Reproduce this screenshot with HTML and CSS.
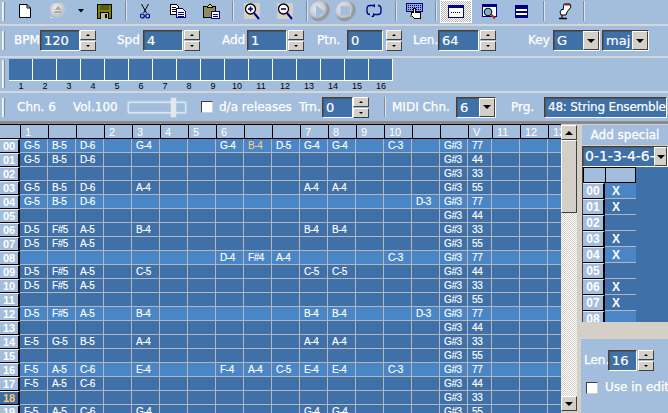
FILE: index.html
```html
<!DOCTYPE html>
<html lang="en"><head><meta charset="utf-8"><title>Tracker</title><link rel="stylesheet" href="styles.css"></head>
<body>
<header class="bars">
<div class="bar bar1">
  <i class="grip"></i>
  <span class="btn w39"><svg width="12" height="14" viewBox="0 0 12 14"><path d="M.5.5h7.5l3.500 3.500v9.500h-11z" fill="#fff" stroke="#000"/><path d="M8 .5v3.500h3.500" fill="none" stroke="#000"/></svg></span>
  <span class="btn w27"><svg width="18" height="16" viewBox="0 0 18 16"><defs><radialGradient id="d1" cx=".4" cy=".4" r=".65"><stop offset="0" stop-color="#f4f4f4"/><stop offset=".65" stop-color="#c9c9c9"/><stop offset="1" stop-color="#a3bddc"/></radialGradient></defs><circle cx="9" cy="7" r="8" fill="url(#d1)"/><path d="M9 3l3.500 4h-7z" fill="#a8a8a8"/><rect x="5.500" y="8" width="7" height="2" fill="#a8a8a8"/><rect x="1" y="14" width="3" height="1" fill="#e8e0c0"/></svg></span>
  <span class="btn w20"><svg width="6" height="4" viewBox="0 0 6 4"><path d="M0 0h6L3 3.500z" fill="#000"/></svg></span>
  <span class="btn w26"><svg width="15" height="15" viewBox="0 0 15 15" shape-rendering="crispEdges"><rect width="15" height="15" fill="#000"/><rect x="1" y="1" width="13" height="13" fill="#808000"/><rect x="3" y="1" width="9" height="5" fill="#5c5c10"/><rect x="3" y="8" width="9" height="7" fill="#000"/><rect x="4" y="9" width="7" height="6" fill="#c4c0a8"/><rect x="8" y="10" width="2" height="4" fill="#000"/></svg></span>
  <i class="sep m8"></i>
  <span class="btn w35"><svg width="10" height="15" viewBox="0 0 10 15"><path d="M1.500 0L6.500 9M8.500 0L3.500 9" stroke="#000" fill="none"/><circle cx="2.300" cy="12" r="2" fill="none" stroke="#000080" stroke-width="1.200"/><circle cx="7.700" cy="12" r="2" fill="none" stroke="#000080" stroke-width="1.200"/></svg></span>
  <span class="btn w32"><svg width="16" height="14" viewBox="0 0 16 14" shape-rendering="crispEdges"><path d="M.5.500h6l2 2v8h-8z" fill="#fff" stroke="#000"/><path d="M2 3h4M2 5h4M2 7h4" stroke="#000"/><path d="M6.500 4.500h6l3 3v6h-9z" fill="#fff" stroke="#000080"/><path d="M8 8h6M8 10h6M8 12h6" stroke="#000080"/></svg></span>
  <span class="btn w34"><svg width="17" height="15" viewBox="0 0 17 15" shape-rendering="crispEdges"><rect x=".5" y="2.500" width="12" height="11" fill="#808040" stroke="#000"/><rect x="1" y="3" width="11" height="10" fill="#8d8d58"/><path d="M4.500 2.500l2-2h1l2 2v1h-5z" fill="#ffd050" stroke="#000"/><rect x="8.500" y="7.500" width="8" height="7" fill="#fff" stroke="#000080"/><path d="M10 10h5M10 12h5" stroke="#000080"/></svg></span>
  <i class="sep m4"></i>
  <span class="btn w36"><svg width="16" height="17" viewBox="0 0 16 17"><rect width="16" height="16" fill="#d4d0c8"/><circle cx="6.500" cy="6" r="5" fill="#fff" stroke="#000" stroke-width="1.300"/><path d="M4 6h5M6.500 3.500v5" stroke="#000080" stroke-width="1.600"/><path d="M10 10l5 6" stroke="#000080" stroke-width="2"/></svg></span>
  <span class="btn w30"><svg width="16" height="17" viewBox="0 0 16 17"><rect width="16" height="16" fill="#d4d0c8"/><circle cx="6.500" cy="6" r="5" fill="#fff" stroke="#000" stroke-width="1.300"/><path d="M4 6h5" stroke="#000080" stroke-width="1.600"/><path d="M10 10l5 6" stroke="#000080" stroke-width="2"/></svg></span>
  <i class="sep m6"></i>
  <span class="btn w24"><svg width="22" height="21" viewBox="0 0 22 21"><defs><radialGradient id="d2" cx=".36" cy=".36" r=".66"><stop offset="0" stop-color="#eceef0"/><stop offset=".55" stop-color="#c8cdd4"/><stop offset=".8" stop-color="#8d8f94"/><stop offset="1" stop-color="#a3bddc"/></radialGradient></defs><circle cx="11" cy="10.500" r="10.500" fill="url(#d2)"/><path d="M7 4l9 6.500-9 6.500z" fill="#a3bddc"/></svg></span>
  <span class="btn w28"><svg width="22" height="21" viewBox="0 0 22 21"><circle cx="11" cy="10.500" r="10.500" fill="url(#d2)"/><rect x="5.500" y="5" width="10" height="10" fill="#a3bddc" stroke="#c8c8c8"/></svg></span>
  <span class="btn w28"><svg width="16" height="14" viewBox="0 0 16 14"><path d="M7 1.500H4Q1 1.500 1 4.500v3Q1 10.500 4 10.500M9 10.500h3Q15 10.500 15 7.500v-3Q15 1.500 12 1.500" fill="none" stroke="#000080" stroke-width="1.300"/><path d="M9 0l-3 1.500L9 3.500zM7 9l3 1.500-3 2z" fill="#000080"/><path d="M5 13l3-3v3z" fill="#000080"/></svg></span>
  <i class="sep m7"></i>
  <span class="btn w36"><svg width="18" height="17" viewBox="0 0 18 17" shape-rendering="crispEdges"><rect x=".5" y=".5" width="16" height="8" fill="#8fa9c8" stroke="#000080"/><path d="M2 2.500h13M2 4.500h13M2 6.500h13" stroke="#000080" stroke-dasharray="1 1"/><path d="M7 8V5h2v4h5v6H8l-3-3V9h2z" fill="#fff" stroke="#000"/><rect x="4" y="12" width="2" height="2" fill="#808000"/></svg></span>
  <i class="sep m2"></i>
  <span class="btn active"><svg width="16" height="13" viewBox="0 0 16 13" shape-rendering="crispEdges"><rect width="16" height="13" fill="#000080"/><rect x="1" y="3" width="14" height="9" fill="#fff"/><path d="M3 7h10" stroke="#000" stroke-dasharray="1 1"/></svg></span>
  <span class="btn w34"><svg width="15" height="15" viewBox="0 0 15 15"><rect x=".5" y=".5" width="14" height="12" fill="#fff" stroke="#000080"/><rect width="15" height="3" fill="#000080"/><circle cx="6" cy="8" r="3.800" fill="#78b8c8" stroke="#000"/><path d="M9 10.500l4 4" stroke="#c02020" stroke-width="2"/></svg></span>
  <span class="btn w31"><svg width="13" height="13" viewBox="0 0 13 13" shape-rendering="crispEdges"><rect width="13" height="13" fill="#000080"/><rect x="1" y="4" width="11" height="2" fill="#fff"/><rect x="1" y="8" width="11" height="2" fill="#fff"/></svg></span>
  <i class="sep m6"></i>
  <span class="btn w38"><svg width="15" height="17" viewBox="0 0 15 17"><path d="M7 1h6l1 3-4 5-1 3H4L3 9l2-3 1 1z" fill="#fff" stroke="#000" stroke-linejoin="round"/><path d="M8 .5h5v2H8z" fill="#a01818"/><path d="M2 15.500h8" stroke="#000" stroke-width="1.500"/><path d="M5 12v3" stroke="#000"/></svg></span>
  <i class="sep"></i>
</div>
<div class="bar bar2">
  <i class="grip"></i>
  <label class="lab lab-bpm">BPM</label><div class="inp i40">120</div><div class="spin"><b class="up"></b><b class="dn"></b></div>
  <label class="lab lab-spd">Spd</label><div class="inp i40">4</div><div class="spin s1"><b class="up"></b><b class="dn"></b></div>
  <label class="lab lab-add">Add</label><div class="inp i40">1</div><div class="spin s1"><b class="up"></b><b class="dn"></b></div>
  <label class="lab lab-ptn">Ptn.</label><div class="inp i36">0</div><div class="spin s3"><b class="up"></b><b class="dn"></b></div>
  <label class="lab lab-len">Len.</label><div class="inp i41">64</div><div class="spin s1"><b class="up"></b><b class="dn"></b></div>
  <label class="lab lab-key">Key</label><div class="combo c47"><span>G</span><b class="drop"></b></div><div class="combo c47 s2"><span>maj</span><b class="drop"></b></div>
</div>
<div class="bar bar3">
  <i class="grip tall"></i>
  <div class="pats">
    <div class="pat">1</div><div class="pat">2</div><div class="pat">3</div><div class="pat">4</div><div class="pat">5</div><div class="pat">6</div><div class="pat">7</div><div class="pat">8</div><div class="pat">9</div><div class="pat">10</div><div class="pat">11</div><div class="pat">12</div><div class="pat">13</div><div class="pat">14</div><div class="pat">15</div><div class="pat">16</div>
  </div>
</div>
<div class="bar bar4">
  <i class="grip"></i>
  <label class="lab lab-chn">Chn. 6</label>
  <label class="lab lab-vol">Vol.100</label>
  <div class="slider"><i class="thumb"></i></div>
  <i class="check chk-da"></i><label class="lab lab-da">d/a releases</label>
  <label class="lab lab-trn">Trn.</label><div class="inp i31 small">0</div><div class="spin small"><b class="up"></b><b class="dn"></b></div>
  <i class="sep m15"></i>
  <label class="lab lab-midi">MIDI Chn.</label><div class="combo c40 small"><span>6</span><b class="drop"></b></div>
  <label class="lab lab-prg">Prg.</label><div class="inp prg small">48: String Ensemble 1</div>
</div>
</header>
<main class="main">
<div class="gridwrap">
<table class="grid">
<thead><tr><th class="corner"></th><th>1</th><th></th><th></th><th>2</th><th>3</th><th>4</th><th>5</th><th>6</th><th></th><th></th><th>7</th><th>8</th><th>9</th><th>10</th><th></th><th></th><th class="v">V</th><th>11</th><th>12</th><th>13</th></tr></thead>
<tbody>
<tr class="hi"><th>00</th><td>G-5<td>B-5<td>D-6<td><td>G-4<td><td><td>G-4<td class="sel">B-4<td>D-5<td>G-4<td>G-4<td><td>C-3<td><td>G#3<td>77<td><td><td></tr>
<tr><th>01</th><td>G-5<td>B-5<td>D-6<td><td><td><td><td><td><td><td><td><td><td><td><td>G#3<td>44<td><td><td></tr>
<tr><th>02</th><td><td><td><td><td><td><td><td><td><td><td><td><td><td><td><td>G#3<td>33<td><td><td></tr>
<tr><th>03</th><td>G-5<td>B-5<td>D-6<td><td>A-4<td><td><td><td><td><td>A-4<td>A-4<td><td><td><td>G#3<td>55<td><td><td></tr>
<tr class="hi"><th>04</th><td>G-5<td>B-5<td>D-6<td><td><td><td><td><td><td><td><td><td><td><td>D-3<td>G#3<td>77<td><td><td></tr>
<tr><th>05</th><td><td><td><td><td><td><td><td><td><td><td><td><td><td><td><td>G#3<td>44<td><td><td></tr>
<tr><th>06</th><td>D-5<td>F#5<td>A-5<td><td>B-4<td><td><td><td><td><td>B-4<td>B-4<td><td><td><td>G#3<td>33<td><td><td></tr>
<tr><th>07</th><td>D-5<td>F#5<td>A-5<td><td><td><td><td><td><td><td><td><td><td><td><td>G#3<td>55<td><td><td></tr>
<tr class="hi"><th>08</th><td><td><td><td><td><td><td><td>D-4<td>F#4<td>A-4<td><td><td><td>C-3<td><td>G#3<td>77<td><td><td></tr>
<tr><th>09</th><td>D-5<td>F#5<td>A-5<td><td>C-5<td><td><td><td><td><td>C-5<td>C-5<td><td><td><td>G#3<td>44<td><td><td></tr>
<tr><th>10</th><td>D-5<td>F#5<td>A-5<td><td><td><td><td><td><td><td><td><td><td><td><td>G#3<td>33<td><td><td></tr>
<tr><th>11</th><td><td><td><td><td><td><td><td><td><td><td><td><td><td><td><td>G#3<td>55<td><td><td></tr>
<tr class="hi"><th>12</th><td>D-5<td>F#5<td>A-5<td><td>B-4<td><td><td><td><td><td>B-4<td>B-4<td><td><td>D-3<td>G#3<td>77<td><td><td></tr>
<tr><th>13</th><td><td><td><td><td><td><td><td><td><td><td><td><td><td><td><td>G#3<td>44<td><td><td></tr>
<tr><th>14</th><td>E-5<td>G-5<td>B-5<td><td>A-4<td><td><td><td><td><td>A-4<td>A-4<td><td><td><td>G#3<td>33<td><td><td></tr>
<tr><th>15</th><td><td><td><td><td><td><td><td><td><td><td><td><td><td><td><td>G#3<td>55<td><td><td></tr>
<tr class="hi"><th>16</th><td>F-5<td>A-5<td>C-6<td><td>E-4<td><td><td>F-4<td>A-4<td>C-5<td>E-4<td>E-4<td><td>C-3<td><td>G#3<td>77<td><td><td></tr>
<tr><th>17</th><td>F-5<td>A-5<td>C-6<td><td><td><td><td><td><td><td><td><td><td><td><td>G#3<td>44<td><td><td></tr>
<tr class="cur"><th>18</th><td><td><td><td><td><td><td><td><td><td><td><td><td><td><td><td>G#3<td>33<td><td><td></tr>
<tr><th>19</th><td>F-5<td>A-5<td>C-6<td><td>G-4<td><td><td><td><td><td>G-4<td>G-4<td><td><td><td>G#3<td>55<td><td><td></tr>
</tbody></table>
</div>
<div class="vscroll"><b class="sbtn up"></b><b class="sthumb"></b><i class="strack"></i><b class="sbtn dn"></b></div>
<aside class="side">
  <div class="addsp">Add special</div>
  <div class="combo spcombo"><span>0-1-3-4-6-7-9</span><b class="drop"></b></div>
  <div class="subwrap">
    <table class="sub">
      <thead><tr><th></th><th class="xc"></th></tr></thead>
      <tbody>
      <tr class="hi"><th>00</th><td>X</td></tr><tr><th>01</th><td>X</td></tr><tr><th>02</th><td></td></tr><tr><th>03</th><td>X</td></tr><tr class="hi"><th>04</th><td>X</td></tr><tr><th>05</th><td></td></tr><tr><th>06</th><td>X</td></tr><tr><th>07</th><td>X</td></tr><tr class="hi"><th>08</th><td></td></tr>
      </tbody>
    </table>
  </div>
  <div class="opts">
    <div class="lenrow"><label class="lab">Len.</label><div class="inp i29">16</div><div class="spin s1 sm"><b class="up"></b><b class="dn"></b></div></div>
    <div class="editrow"><i class="check"></i><label class="lab">Use in editor</label></div>
  </div>
</aside>
</main>
</body></html>
```
FILE: styles.css
```css
*{box-sizing:border-box}
html,body{margin:0;padding:0;width:668px;height:413px;overflow:hidden;background:#a3bddc}
body{font-family:"DejaVu Sans",sans-serif;color:#fff}
.bars{display:block}
.bar{display:flex;align-items:center;background:#a3bddc;overflow:hidden;white-space:nowrap}
.bar1{height:26px;padding-bottom:2px;border-bottom:2px solid #d4d6d8}
.bar2{height:32px;padding-bottom:2px;padding-top:1px;border-bottom:2px solid #d4d6d8}
.bar3{height:35px;border-bottom:2px solid #d4d6d8;align-items:flex-start}
.bar4{height:31px;border-bottom:3px solid #8a8a8a}
.grip{display:block;margin-left:2px;width:3px;height:19px;background:#e6e8ea;border-right:1px solid #8090a4;border-left:1px solid #f4f4f4;flex:none}
.grip.tall{height:28px;margin-top:2px}
.sep{display:block;flex:none;width:2px;height:20px;background:#dfe3e8;border-left:1px solid #7f8c9c}
.m2{margin-left:2px}.m4{margin-left:4px}.m6{margin-left:6px}.m7{margin-left:7px}.m8{margin-left:8px}.m15{margin-left:15px}
.btn{display:flex;align-items:center;justify-content:center;flex:none;height:22px}
.w20{width:20px}.w24{width:24px}.w26{width:26px}.w27{width:27px}.w28{width:28px}.w30{width:30px}.w31{width:31px}.w32{width:32px}.w34{width:34px}.w35{width:35px}.w36{width:36px}.w38{width:38px}.w39{width:39px}
.active{width:32px;margin-left:3px;height:23px;border:1px solid #fff;background:conic-gradient(#fff 25%,#b8b8b0 0 50%,#fff 0 75%,#b8b8b0 0) 0 0/2px 2px}
.lab{display:block;flex:none;font-size:12px;color:#fff;line-height:15px;-webkit-text-stroke:.25px #fff}
.lab-bpm{margin-left:9px;width:26px}
.lab-spd{margin-left:21px;width:26px}
.lab-add{margin-left:22px;width:25px}
.lab-ptn{margin-left:13px;width:30px}
.lab-len{margin-left:11px;width:25px}
.lab-key{margin-left:32px;width:25px}
.inp,.combo{flex:none;height:21px;border:1px solid;border-color:#404040 #fff #fff #404040;box-shadow:inset 1px 1px 0 #555;background:#4070a8;color:#fff;font-size:13px;line-height:19px;padding-left:3px;overflow:hidden;white-space:nowrap;-webkit-text-stroke:.2px #fff}
.i29{width:29px}.i31{width:31px}.i36{width:36px}.i40{width:40px}.i41{width:41px}
.prg{width:123px;padding-left:3px;font-size:12px;letter-spacing:-.2px}
.small{height:21px}
.spin{display:flex;flex-direction:column;gap:1px;width:16px;flex:none;height:21px}
.s1{margin-left:1px}.s2{margin-left:2px}.s3{margin-left:3px}
.spin b{display:flex;align-items:center;justify-content:center;flex:1;background:#d4d0c8;border:1px solid;border-color:#fff #404040 #404040 #fff}
.spin b::after{content:"";width:0;height:0;border-left:2px solid transparent;border-right:2px solid transparent}
.spin .up::after{border-bottom:2px solid #000}
.spin .dn::after{border-top:2px solid #000}
.combo{display:flex;padding-left:3px;justify-content:space-between;align-items:stretch}
.combo span{overflow:hidden}
.c47{width:47px}.c40{width:40px}
.drop{display:flex;align-items:center;justify-content:center;flex:none;width:16px;background:#d4d0c8;border:1px solid;border-color:#fff #404040 #404040 #fff;box-shadow:1px 1px 0 #222}
.drop::after{content:"";width:0;height:0;border-left:4px solid transparent;border-right:4px solid transparent;border-top:4px solid #000}
.pats{display:flex;margin-left:4px;margin-top:1px}
.pat{width:24px;height:32px;padding-top:23px;border:0 solid #fff;text-align:center;color:#000;font:9px/9px "Liberation Sans",sans-serif;background:linear-gradient(#4070a8 21px,#fff 21px,#fff 22px,#a3bddc 22px);position:relative}
.pat::after{content:"";position:absolute;right:0;top:0;width:1px;height:22px;background:#fff}
.lab-chn{margin-left:12px;width:39px}
.lab-vol{margin-left:17px;width:47px}
.slider{flex:none;margin-left:8px;width:58px;height:11px;border:1px solid #dce6f0;box-shadow:0 0 2px #fff,inset 0 0 1px #fff;position:relative}
.thumb{position:absolute;left:42px;top:-5px;width:5px;height:19px;background:#e4e8ec;box-shadow:0 0 1px #fff}
.check{display:block;flex:none;width:12px;height:12px;background:#fff;border:1px solid;border-color:#404040 #d4d0c8 #d4d0c8 #404040}
.chk-da{margin-left:15px}
.lab-da{margin-left:6px;width:74px}
.lab-trn{margin-left:6px;width:23px}
.lab-midi{margin-left:6px;width:64px}
.lab-prg{margin-left:15px;width:33px}
.main{display:flex;height:289px;overflow:hidden}
.gridwrap{width:561px;flex:none;overflow:hidden;height:289px}
table{border-collapse:separate;border-spacing:0}
.grid{table-layout:fixed;width:576px}
.grid th,.grid td{padding:0;height:14px;max-height:14px;overflow:hidden;white-space:nowrap;font:10px/11px "Liberation Sans",sans-serif;letter-spacing:-.4px}
.grid td{width:28px;background:#4070a8;border-right:1px solid #b4b8bc;border-bottom:1px solid #b4b8bc;padding-left:4px;color:#fff;vertical-align:middle;-webkit-text-stroke:.15px #fff}
.grid tr td:nth-child(18){width:24px}
.grid tr.hi td{background:#4a86c5}
.grid td.sel{background:#2f5078;color:#ffd27a;-webkit-text-stroke:0}
.grid thead th{height:15px;width:28px;background:#a3bddc;border-top:1px solid #000;border-bottom:1px solid #000;border-left:1px solid #000;text-align:left;padding:2px 0 0 4px;color:#fff;font:11px/11px "Liberation Sans",sans-serif;letter-spacing:0}
.grid thead th:first-child{width:20px;border-left:0}
.grid thead th.v{width:24px}
.grid tbody th{width:20px;background:#a3bddc;border-right:2px solid #000;border-bottom:1px solid #000;border-top:1px solid #e8eef5;color:#fff;font:bold 11px/11px "Liberation Sans",sans-serif;text-align:center;letter-spacing:0}
.grid tr.cur td{background:#4070a8}
.grid tr.cur th{background:#3a6ba6;color:#ffc870}
.vscroll{width:16px;flex:none;display:flex;flex-direction:column;height:289px;background:#d4d0c8}
.sbtn,.sthumb{display:flex;align-items:center;justify-content:center;flex:none;background:#d4d0c8;border:1px solid;border-color:#fff #404040 #404040 #fff}
.sbtn{height:15px;margin-top:1px}
.sbtn.up::after{content:"";width:0;height:0;border-left:4px solid transparent;border-right:4px solid transparent;border-bottom:4px solid #000}
.sbtn.dn::after{content:"";width:0;height:0;border-left:4px solid transparent;border-right:4px solid transparent;border-top:4px solid #000}
.sthumb{height:73px}
.strack{display:block;flex:1;background:conic-gradient(#fff 25%,#d4d0c8 0 50%,#fff 0 75%,#d4d0c8 0) 0 0/2px 2px}
.vscroll .dn{margin-top:0;margin-bottom:2px}
.side{flex:1;min-width:0;display:flex;flex-direction:column;background:#d4d0c8;padding-left:5px;overflow:hidden}
.addsp{height:20px;margin-top:1px;background:#a3bddc;text-align:center;font:12px/20px "DejaVu Sans",sans-serif;color:#fff;-webkit-text-stroke:.3px #fff}
.spcombo{height:21px;width:86px;margin-top:1px;padding-left:2px;font-size:14px;line-height:19px;flex:none}
.spcombo span{flex:1;min-width:0}
.spcombo .drop{width:13px}
.subwrap{height:155px;flex:none;background:#4070a8;overflow:hidden;border-left:1px solid #404040}
.sub{table-layout:fixed;width:53px}
.sub th,.sub td{padding:0;overflow:hidden}
.sub thead th{height:16px;background:#a3bddc;border-left:1px solid #000;border-top:1px solid #000;border-bottom:1px solid #000}
.sub thead th.xc{width:31px;border-right:1px solid #000}
.sub tbody th{height:16px;width:21px;background:#a3bddc;border-right:2px solid #000;border-bottom:1px solid #000;border-top:1px solid #e8eef5;font:bold 12px/13px "Liberation Sans",sans-serif;color:#fff;text-align:center}
.sub td{height:16px;background:#4070a8;border-bottom:1px solid #b4b8bc;font:bold 12px/14px "Liberation Sans",sans-serif;padding-left:7px;color:#fff}
.sub tr.hi td{background:#4a86c5}
.opts{margin-top:17px;flex:1;background:#a3bddc;margin-left:-1px;padding:11px 0 0 3px}
.lenrow{display:flex;align-items:center}
.lenrow .lab{width:24px}
.editrow{display:flex;align-items:center;gap:7px;margin-top:9px;margin-left:2px;white-space:nowrap}
```
